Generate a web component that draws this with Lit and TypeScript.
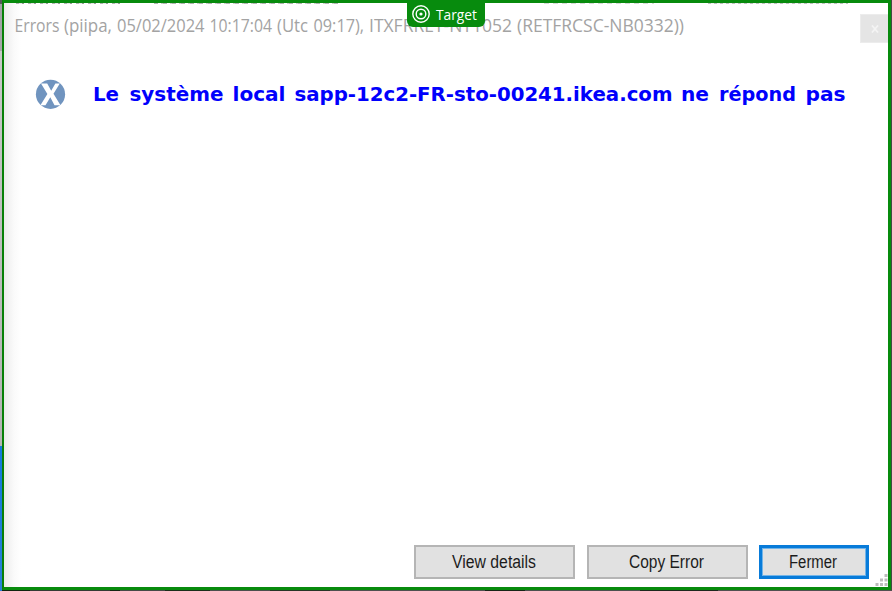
import { LitElement, html, css, svg } from "lit";
import { customElement, property } from "lit/decorators.js";

interface Run { x: number; width: number; text: string; }

// Draws runs of text, each fitted to its own width on one baseline.
@customElement("fitted-label")
class FittedLabel extends LitElement {
  @property() text = "";
  @property({ type: Number }) width = 100;
  @property({ attribute: false }) runs: Run[] = [];
  static styles = css`
    :host { display: block; flex: none; }
    svg { display: block; overflow: visible; }
    text { fill: currentColor; white-space: pre; }
  `;
  render() {
    const runs = this.runs.length ? this.runs : [{ x: 0, width: this.width, text: this.text }];
    return html`<svg width=${this.width} height="24">
      ${runs.map((r) => svg`<text x=${r.x} y="18" textLength=${r.width} lengthAdjust="spacingAndGlyphs">${r.text}</text>`)}
    </svg>`;
  }
}

const TITLE: Run[] = [
  { x: 0.5, width: 45, text: "Errors" },
  { x: 50, width: 48, text: "(piipa," },
  { x: 103, width: 87.5, text: "05/02/2024" },
  { x: 195.5, width: 62.5, text: "10:17:04" },
  { x: 263, width: 31, text: "(Utc" },
  { x: 299.5, width: 50.5, text: "09:17)," },
  { x: 355, width: 143, text: "ITXFRRET-NT1052" },
  { x: 503, width: 167, text: "(RETFRCSC-NB0332))" },
];

const MESSAGE: Run[] = [
  { x: -1, width: 26, text: "Le" },
  { x: 35.5, width: 94, text: "système" },
  { x: 138.5, width: 53, text: "local" },
  { x: 200.5, width: 378, text: "sapp-12c2-FR-sto-00241.ikea.com" },
  { x: 587, width: 28, text: "ne" },
  { x: 625, width: 77, text: "répond" },
  { x: 711.5, width: 40, text: "pas" },
];

@customElement("app-root")
class AppRoot extends LitElement {
  static styles = css`
    :host { display: block; width: 892px; height: 591px; overflow: hidden; }
    * { box-sizing: border-box; }
    .desktop {
      position: relative; display: flex; width: 892px; height: 591px;
      padding: 0 1px 1px 2px;
      background: linear-gradient(#55585a, #55585a) 0 0 / 2px 4px no-repeat,
        linear-gradient(#9fa1a4, #a8a8aa) 0 4px / 2px 47px no-repeat,
        linear-gradient(#c8c8c8, #b4b4b4) 0 51px / 2px 395px no-repeat,
        linear-gradient(#1378dc, #2a7fd8) 0 446px / 2px 145px no-repeat,
        linear-gradient(90deg, #10240f 30px, #343b34 30px 110px, #142612 110px 120px, #454a47 120px 165px, #1a2e1a 165px 210px, #4b4f4d 210px 270px, #263526 270px 330px, #4e504f 330px 485px, #172417 485px 525px, #4b504e 525px 640px, #1d281d 640px 718px, #505050 718px) 0 590px / 892px 1px no-repeat,
        #434b43;
    }
    .window {
      flex: 1; display: flex; flex-direction: column;
      border: 3px solid #078b0d; border-left: 2px solid #078007;
      background: linear-gradient(90deg, #ebebeb 0, #f3f3f3 5px, #fafafa 10px, #fff 17px);
    }
    .sliver {
      height: 1px; flex: none; opacity: .75;
      background: repeating-linear-gradient(90deg, #999 0 3px, #ddd 3px 6px, #777 6px 8px, #fff 8px 12px) 12px 0 / 106px 1px no-repeat,
        repeating-linear-gradient(90deg, #999 0 4px, #fff 4px 7px, #bbb 7px 9px) 150px 0 / 185px 1px no-repeat,
        repeating-linear-gradient(90deg, #ccc 0 5px, #fff 5px 9px) 540px 0 / 110px 1px no-repeat,
        repeating-linear-gradient(90deg, #aaa 0 3px, #eee 3px 6px) 704px 0 / 140px 1px no-repeat;
    }
    .titlebar { display: flex; justify-content: space-between; height: 39px; padding: 10px 0 0 10px; }
    .title { color: #a3a3a3; font: 17.7px "Open Sans", "Noto Sans", sans-serif; }
    .close {
      width: 28px; height: 29px; display: grid; place-items: center;
      background: #e5e5e5; border: 1px solid #ececec; border-right: 0;
    }
    .content { flex: 1; display: flex; align-items: flex-start; padding: 36px 0 0 31px; }
    .content svg { display: block; flex: none; }
    .message { margin: 4px 0 0 28px; color: #0000fc; font: bold 19.5px "DejaVu Sans", sans-serif; }
    .footer { display: flex; height: 42px; padding-left: 410px; gap: 12px; }
    .button {
      height: 34px; width: 161px; display: flex; justify-content: center; align-items: center;
      background: #e1e1e1; border: 2px solid #b5b5b5; color: #1c1c1c; padding-right: 2px;
      font: 18px "Liberation Sans", sans-serif;
    }
    .default { width: 110px; margin-left: -1px; border: 3px solid #087bd9; outline: 1px solid #71b4e8; outline-offset: -4px; }
    .grip { margin: 29px 0 0 -6px; flex: none; }
    .target {
      position: absolute; left: 407px; top: 0; width: 78px; height: 27px;
      border-radius: 0 0 6px 6px; background: #078b0d; color: #fff;
      display: flex; align-items: center; padding: 0 0 0 5px; gap: 6px;
      font: 15px "Open Sans", "Noto Sans", sans-serif;
    }
  `;
  render() {
    return html`<div class="desktop">
      <div class="window">
        <div class="sliver"></div>
        <div class="titlebar">
          <fitted-label class="title" .width=${670} .runs=${TITLE}></fitted-label>
          <div class="close"><svg width="8" height="8" viewBox="0 0 8 8"><path d="M1 .5 7 7.5M7 .5 1 7.5" stroke="#f4f4f4" stroke-width="1.7"/></svg></div>
        </div>
        <div class="content">
          <svg width="31" height="31" viewBox="0 0 31 31">
            <circle cx="15.5" cy="15.3" r="14.6" fill="#7094bf"/>
            <path d="M6 4.5h6.2l4 7.2 4.2-7.2h4.4l-6.3 10.3 7 11.5h-6l-4.2-8-4.8 8H5.4l7-11.3z" fill="#fff"/>
          </svg>
          <fitted-label class="message" .width=${751} .runs=${MESSAGE}></fitted-label>
        </div>
        <div class="footer">
          <div class="button"><fitted-label .width=${84} .text=${"View details"}></fitted-label></div>
          <div class="button"><fitted-label .width=${75} .text=${"Copy Error"}></fitted-label></div>
          <div class="button default"><fitted-label .width=${48} .text=${"Fermer"}></fitted-label></div>
          <svg class="grip" width="13" height="13" viewBox="0 0 13 13"><path d="M9.5 0h3v3h-3zM5 4.5h3v3H5zM9.5 4.5h3v3h-3zM.5 9h3v3h-3zM5 9h3v3H5zM9.5 9h3v3h-3z" fill="#bdbdbd"/></svg>
        </div>
      </div>
      <div class="target">
        <svg width="18" height="18" viewBox="0 0 18 18" fill="none" stroke="#fff" stroke-width="1.4"><circle cx="9" cy="9" r="8.2"/><circle cx="9" cy="9" r="4.8"/><circle cx="9" cy="9" r="1.6" fill="#fff" stroke="none"/></svg>
        <fitted-label .width=${41} .text=${"Target"}></fitted-label>
      </div>
    </div>`;
  }
}
